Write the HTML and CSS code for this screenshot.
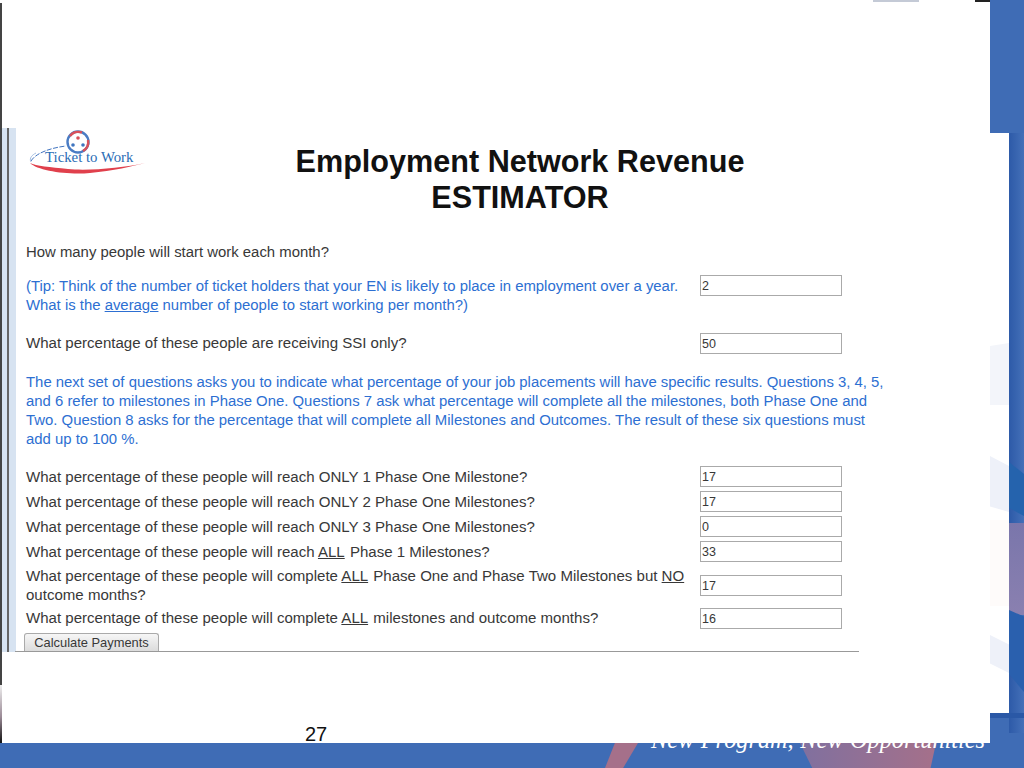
FILE: index.html
```html
<!DOCTYPE html>
<html lang="en">
<head>
<meta charset="utf-8">
<title>Employment Network Revenue Estimator</title>
<link rel="stylesheet" href="styles.css">
</head>
<body>
<div class="slide">
  <div class="blob blob-a"></div>
  <div class="blob blob-b"></div>
  <div class="tagline">New Program, New Opportunities</div>
  <div class="edge-shade edge-1"></div>
  <div class="edge-pink"></div>
  <div class="edge-shade edge-2"></div>
  <div class="edge-shade edge-3"></div>
  <div class="under-shadow"></div>
  <div class="panel panel-wide"></div>
  <div class="panel panel-tall"></div>
  <div class="tint tint-1"></div>
  <div class="tint tint-2"></div>
  <div class="tint tint-3"></div>
  <div class="tint tint-4"></div>
  <div class="top-gray"></div>
  <div class="top-black"></div>
  <div class="left-rule"></div>
  <div class="left-fade"></div>

  <form class="sheet">
    <header class="masthead">
      <svg class="logo" viewBox="0 0 120 50" aria-label="Ticket to Work">
        <path class="swoosh-blue" d="M3 33C8 25 22 20 38 18"/>
        <path class="swoosh-pale" d="M3 34C1 30 4 27 8 25"/>
        <path class="swoosh-red" d="M2 35C10 43 40 47 62 45C85 43 105 38 117 35C95 40 60 43 40 41C22 39 8 38 2 35Z"/>
        <circle class="ring-blue" cx="50" cy="14" r="10.5"/>
        <path class="ring-red" d="M42 8A10.5 10.5 0 0 1 54 4.500M60 12A10.500 10.500 0 0 1 55 23"/>
        <circle class="dot-red" cx="50" cy="10" r="1.800"/>
        <circle class="dot-blue" cx="45" cy="17" r="1.800"/>
        <circle class="dot-blue" cx="55" cy="17" r="1.800"/>
        <text class="logo-text" x="17" y="34">Ticket to Work</text>
      </svg>
      <h1 class="title">Employment Network Revenue<br>ESTIMATOR</h1>
    </header>

    <p class="line q-first">How many people will start work each month?</p>

    <div class="row row-tip">
      <label class="line tip tip-label">(Tip: Think of the number of ticket holders that your EN is likely to place in employment over a year. What is the <u>average</u> number of people to start working per month?)</label>
      <input class="field" type="text" value="2">
    </div>
    <div class="row row-ssi">
      <label class="line question">What percentage of these people are receiving SSI only?</label>
      <input class="field" type="text" value="50">
    </div>

    <p class="line tip intro">The next set of questions asks you to indicate what percentage of your job placements will have specific results. Questions 3, 4, 5, and 6 refer to milestones in Phase One. Questions 7 ask what percentage will complete all the milestones, both Phase One and Two. Question 8 asks for the percentage that will complete all Milestones and Outcomes. The result of these six questions must add up to 100 %.</p>

    <div class="rows">
      <div class="row row-single">
        <label class="line question">What percentage of these people will reach ONLY 1 Phase One Milestone?</label>
        <input class="field" type="text" value="17">
      </div>
      <div class="row row-single">
        <label class="line question">What percentage of these people will reach ONLY 2 Phase One Milestones?</label>
        <input class="field" type="text" value="17">
      </div>
      <div class="row row-single">
        <label class="line question">What percentage of these people will reach ONLY 3 Phase One Milestones?</label>
        <input class="field" type="text" value="0">
      </div>
      <div class="row row-single">
        <label class="line question">What percentage of these people will reach <u>ALL</u> Phase 1 Milestones?</label>
        <input class="field" type="text" value="33">
      </div>
      <div class="row row-double">
        <label class="line question">What percentage of these people will complete <u>ALL</u> Phase One and Phase Two Milestones but <u>NO</u> outcome months?</label>
        <input class="field" type="text" value="17">
      </div>
      <div class="row">
        <label class="line question">What percentage of these people will complete <u>ALL</u> milestones and outcome months?</label>
        <input class="field" type="text" value="16">
      </div>
    </div>

    <button class="calc" type="button">Calculate Payments</button>
  </form>

  <div class="page-no">27</div>
</div>
</body>
</html>
```
FILE: styles.css
```css
* { box-sizing: border-box; }
html, body { margin: 0; padding: 0; }
body { background: #3f6cb5; font-family: "Liberation Sans", Arial, sans-serif; }

.slide { position: relative; width: 1024px; height: 768px; overflow: hidden; background: #3f6cb5; }

.tagline {
  position: absolute; left: 651px; top: 725px; white-space: nowrap;
  color: #fff; font: italic 24.3px/30px "Liberation Serif", serif; word-spacing: 0.5px;
}
.blob { position: absolute; }
.blob-a { left: 605px; top: 743px; width: 33px; height: 25px; clip-path: polygon(30% 0, 100% 0, 55% 100%, 0 100%); background: #a5708a; }
.blob-b { left: 800px; top: 743px; width: 136px; height: 25px; clip-path: polygon(0 0, 100% 0, 96% 100%, 9% 100%); background: linear-gradient(90deg, #80709f, #a5708a); }

.edge-shade { position: absolute; left: 1009px; width: 15px; }
.edge-1 { top: 133px; height: 600px; background: linear-gradient(90deg, #2d5aa8, #4470b8); }
.edge-2 { top: 462px; height: 54px; background: #2563ad; clip-path: polygon(0 0, 100% 22%, 100% 100%, 0 85%); }
.edge-3 { top: 610px; height: 82px; background: #2a60ae; clip-path: polygon(0 0, 100% 8%, 100% 100%, 0 78%); }
.edge-pink { position: absolute; left: 1009px; top: 523px; width: 15px; height: 92px; background: linear-gradient(180deg, #7a76ab, #8a80b0); }
.under-shadow { position: absolute; left: 990px; top: 713px; width: 34px; height: 5px; background: #2a58a6; }

.panel { position: absolute; left: 0; background: #fff; }
.panel-wide { top: 0; width: 990px; height: 743px; }
.panel-tall { top: 133px; width: 1009px; height: 580px; }

.tint { position: absolute; left: 990px; width: 19px; background: #f3f5fa; }
.tint-1 { top: 343px; height: 62px; clip-path: polygon(0 5%, 100% 0, 100% 100%, 0 100%); }
.tint-2 { top: 456px; height: 56px; background: #eef1f9; clip-path: polygon(0 0, 100% 18%, 100% 100%, 0 90%); }
.tint-3 { top: 520px; height: 86px; background: #fefbfa; }
.tint-4 { top: 635px; height: 38px; background: #eef1f9; clip-path: polygon(0 0, 100% 25%, 100% 100%, 0 75%); }

.top-gray { position: absolute; left: 873px; top: 0; width: 46px; height: 2px; background: #c4cad6; }
.top-black { position: absolute; left: 975px; top: 0; width: 15px; height: 2px; background: #222; }
.left-rule { position: absolute; left: 0; top: 3px; width: 2px; height: 682px; background: #444; }
.left-fade { position: absolute; left: 0; top: 685px; width: 2px; height: 58px; background: linear-gradient(180deg, #eee, #9a8a96 55%, #111); }

.sheet {
  position: absolute; left: 2px; top: 128px; width: 890px; height: 524px;
  padding-left: 24px;
  color: #383838; font-size: 14.9px; line-height: 19px;
}
.sheet::before {
  content: ""; position: absolute; left: 0; top: 0; bottom: 0; width: 14px;
  background: linear-gradient(90deg, #d7e3f1 5px, #666 5px, #666 7px, #d7e3f1 7px);
}
.sheet::after {
  content: ""; position: absolute; left: 13px; top: 523px; width: 844px; height: 1px; background: #999;
}

.masthead { display: flex; height: 106px; padding-left: 2px; }
.logo { flex: none; width: 120px; height: 50px; }
.swoosh-blue { fill: none; stroke: #2a63b8; stroke-width: 0.9; stroke-dasharray: 5 1.5; }
.swoosh-pale { fill: none; stroke: #9db8dc; stroke-width: 0.9; }
.swoosh-red { fill: #e0404c; }
.ring-blue { fill: none; stroke: #4a7cc4; stroke-width: 2.4; }
.ring-red { fill: none; stroke: #d9505a; stroke-width: 2.4; }
.dot-red { fill: #d9505a; }
.dot-blue { fill: #3f75bf; }
.logo-text { fill: #2a6db5; font: 14.8px "Liberation Serif", serif; }
.title {
  flex: 1; margin: 15px 0 0; text-align: center; color: #111;
  font-size: 30.6px; line-height: 36px; font-weight: 700;
}

.line { margin: 0; display: block; }
.q-first { margin-top: 9px; }
.tip { color: #2d6fd2; }
.question { font-size: 15.05px; }
.question u { margin-right: 1px; }

.row { display: grid; grid-template-columns: 674px 142px; align-items: start; width: 816px; }
.row .line { padding-right: 10px; }
.row-tip { margin-top: 13px; }
.row-tip .tip-label { padding-top: 2px; }
.row-ssi { margin-top: 18px; }
.intro { margin-top: 19px; width: 866px; }

.rows { display: grid; row-gap: 4px; margin-top: 17px; }
.row-single .line { padding-top: 1px; }
.row-double .field { margin-top: 9px; }

.field {
  width: 142px; height: 21px; padding: 0 1px; margin: 0;
  border: 1px solid #aaa; border-radius: 0; background: #fff; color: #383838;
  font: 12.5px/19px "Liberation Sans", Arial, sans-serif;
}

.calc {
  display: block; width: 135px; height: 18px; margin: 4px 0 0 -2px; padding: 0;
  border: 1px solid #aaa; border-bottom: 0; border-radius: 3px 3px 0 0;
  background: linear-gradient(180deg, #f6f6f6, #dcdcdc); color: #383838;
  font: 12.9px/17px "Liberation Sans", Arial, sans-serif;
}

.page-no { position: absolute; left: 305px; top: 723px; color: #111; font-size: 20px; line-height: 22px; }
```
